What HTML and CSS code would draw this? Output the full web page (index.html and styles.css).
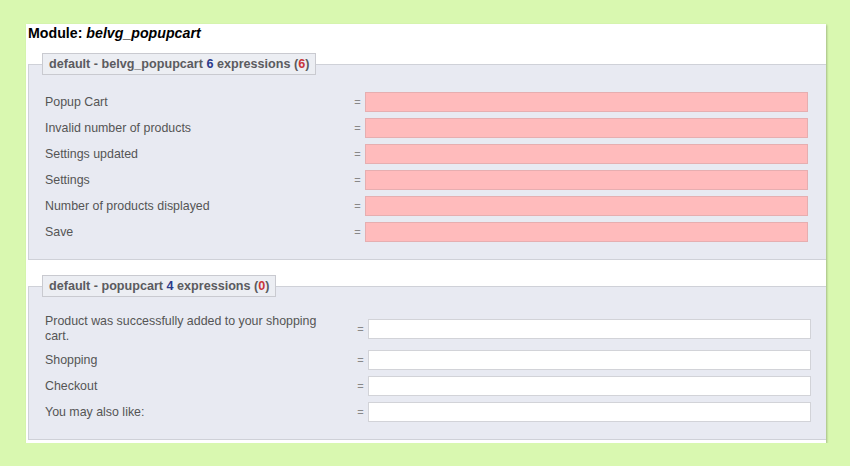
FILE: index.html
```html
<!DOCTYPE html>
<html>
<head>
    <meta charset="UTF-8">
    <title>Translations - belvg_popupcart</title>
    <link rel="stylesheet" href="styles.css">
</head>
<body>
    <div class="panel">
        <h1 class="module-title">Module: <em>belvg_popupcart</em></h1>

        <fieldset class="group">
            <legend>default - belvg_popupcart <span class="count">6</span> expressions (<span class="missing">6</span>)</legend>
            <div class="rows">
                <label class="row">
                    <span class="key">Popup Cart</span>
                    <span class="eq">=</span>
                    <input type="text" class="value empty">
                </label>
                <label class="row">
                    <span class="key">Invalid number of products</span>
                    <span class="eq">=</span>
                    <input type="text" class="value empty">
                </label>
                <label class="row">
                    <span class="key">Settings updated</span>
                    <span class="eq">=</span>
                    <input type="text" class="value empty">
                </label>
                <label class="row">
                    <span class="key">Settings</span>
                    <span class="eq">=</span>
                    <input type="text" class="value empty">
                </label>
                <label class="row">
                    <span class="key">Number of products displayed</span>
                    <span class="eq">=</span>
                    <input type="text" class="value empty">
                </label>
                <label class="row">
                    <span class="key">Save</span>
                    <span class="eq">=</span>
                    <input type="text" class="value empty">
                </label>
            </div>
        </fieldset>

        <fieldset class="group">
            <legend>default - popupcart <span class="count">4</span> expressions (<span class="missing">0</span>)</legend>
            <div class="rows rows-wide">
                <label class="row">
                    <span class="key">Product was successfully added to your shopping cart.</span>
                    <span class="eq">=</span>
                    <input type="text" class="value">
                </label>
                <label class="row">
                    <span class="key">Shopping</span>
                    <span class="eq">=</span>
                    <input type="text" class="value">
                </label>
                <label class="row">
                    <span class="key">Checkout</span>
                    <span class="eq">=</span>
                    <input type="text" class="value">
                </label>
                <label class="row">
                    <span class="key">You may also like:</span>
                    <span class="eq">=</span>
                    <input type="text" class="value">
                </label>
            </div>
        </fieldset>
    </div>
</body>
</html>
```

FILE: styles.css
```css
body {
    font-family: "Liberation Sans", Arial, sans-serif;
    margin: 0;
    padding: 24px 0 0 26px;
    background-color: #d9f8b0;
    color: #555;
}
.panel {
    width: 800px;
    background: #fff;
    padding-bottom: 3px;
    box-shadow: 1px 1px 2px rgba(0,0,0,0.25);
}
.module-title {
    margin: 0;
    padding: 0 2px;
    font-size: 14.2px;
    line-height: 18px;
    color: #000;
}
.group {
    margin: 11px 0 0 2px;
    padding: 0 0 17px 13px;
    border: 1px solid #cfd1d8;
    border-right: none;
    background: #e8eaf2;
}
.group + .group {
    margin-top: 15px;
}
legend {
    padding: 0 6px;
    border: 1px solid #c9cad0;
    background: #eceef3;
    font-size: 12.6px;
    font-weight: bold;
    line-height: 20px;
    color: #5b5b60;
}
.count {
    color: #2b3a8c;
}
.missing {
    color: #c8353a;
}
.rows {
    display: flex;
    flex-direction: column;
    gap: 6px;
    padding: 17px 0 0 3px;
}
.row {
    display: grid;
    grid-template-columns: 305px 15px 443px;
    align-items: center;
    min-height: 20px;
}
.rows-wide .row {
    grid-template-columns: 308px 15px 443px;
}
.rows-wide .key {
    max-width: 290px;
}
.key {
    font-size: 12.4px;
    line-height: 15px;
}
.eq {
    font-size: 11px;
    color: #888;
    text-align: center;
}
.value {
    box-sizing: border-box;
    height: 20px;
    margin: 0;
    width: 100%;
    border: 1px solid #d2d3d8;
    background: #fff;
    font-family: inherit;
}
.value.empty {
    border-color: #e6aeb0;
    background: #ffbbbc;
}
```
